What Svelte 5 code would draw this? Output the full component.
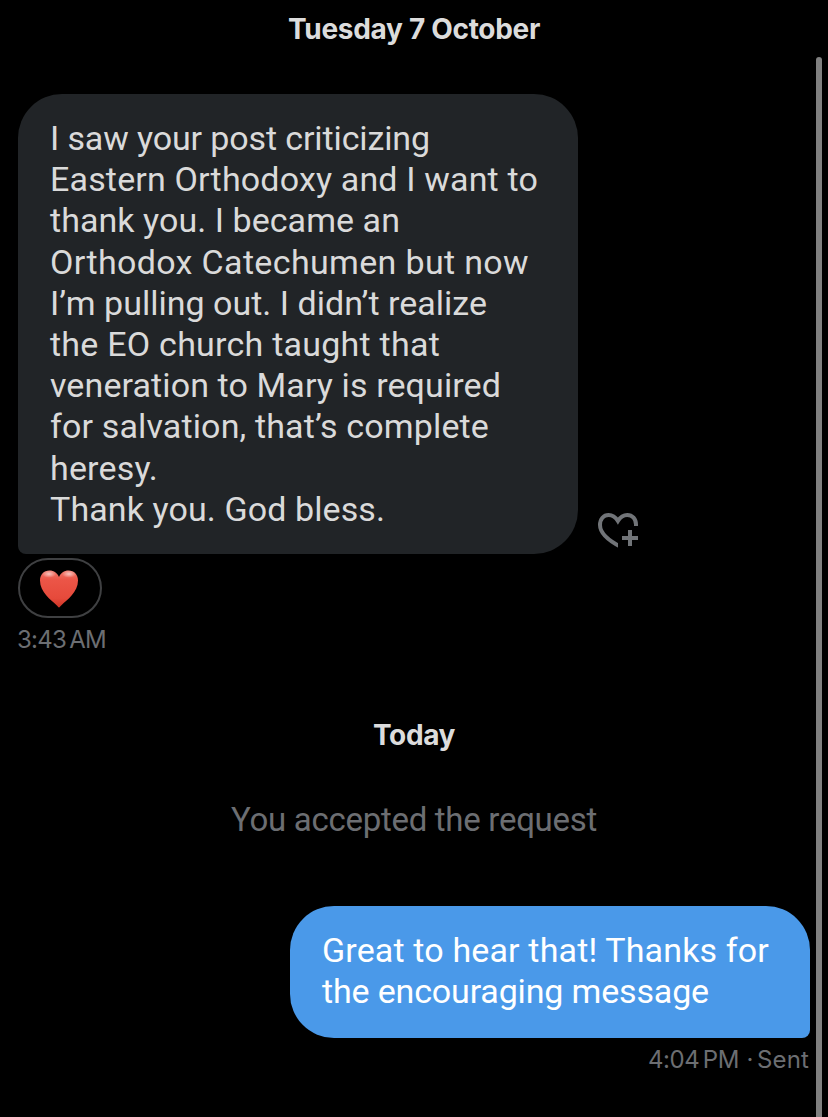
<script>
  const received = [
    ['I saw your post criticizing', 380],
    ['Eastern Orthodoxy and I want to', 488],
    ['thank you. I became an', 350],
    ['Orthodox Catechumen but now', 479],
    ['I’m pulling out. I didn’t realize', 437],
    ['the EO church taught that', 390],
    ['veneration to Mary is required', 451],
    ['for salvation, that’s complete', 439],
    ['heresy.', 108],
    ['Thank you. God bless.', 335],
  ];
  const sent = [
    ['Great to hear that! Thanks for', 447],
    ['the encouraging message', 387],
  ];

  // Tracks a line of text so that it spans the given measure.
  function fit(node, width) {
    const natural = node.getBoundingClientRect().width;
    node.style.letterSpacing = `${(width - natural) / node.textContent.length}px`;
  }
</script>

<main>
  <section class="thread">
    <h2 class="first"><span use:fit={252}>Tuesday 7 October</span></h2>

    <div class="row">
      <div class="bubble in">
        {#each received as [text, width]}
          <p><span use:fit={width}>{text}</span></p>
        {/each}
      </div>
      <button class="react" aria-label="Add reaction">
        <svg width="40" height="36" viewBox="0 0 40 36" fill="none" stroke="#717478" stroke-width="4">
          <clipPath id="cut"><path d="M0 0H40V13H20V36H0Z" /></clipPath>
          <path clip-path="url(#cut)" d="M24 34.500C11 28 2 20.500 2 12C2 6 5.600 2 10.600 2C14.700 2 17.600 4.300 19.900 8C22.200 4.300 25.200 2 29.300 2C34.400 2 38 6 38 11.500V14" />
          <path d="M32 17V33M24 25H40" />
        </svg>
      </button>
    </div>

    <div class="reaction">
      <svg width="40" height="40" viewBox="0 0 40 40">
        <defs>
          <linearGradient id="red" x1="0" y1="0" x2="0" y2="1">
            <stop offset="0" stop-color="#f0796c" />
            <stop offset=".25" stop-color="#ec5547" />
            <stop offset=".75" stop-color="#e64a3b" />
            <stop offset="1" stop-color="#cc3426" />
          </linearGradient>
          <radialGradient id="shine">
            <stop offset="0" stop-color="#fff" stop-opacity=".6" />
            <stop offset="1" stop-color="#fff" stop-opacity="0" />
          </radialGradient>
        </defs>
        <path fill="url(#red)" d="M20 38.500C19.300 38.500 18.800 37.400 17.600 36.200C12 31 1 23 1 11.500C1 5.500 5 1.500 10.500 1.500C15 1.500 18.300 4 20 8C21.700 4 25 1.500 29.500 1.500C35 1.500 39 5.500 39 11.500C39 23 28 31 22.400 36.200C21.200 37.400 20.700 38.500 20 38.500Z" />
        <ellipse cx="10" cy="5" rx="7" ry="3.800" fill="url(#shine)" />
        <ellipse cx="30" cy="5" rx="7" ry="3.800" fill="url(#shine)" />
      </svg>
    </div>
    <div class="meta"><span class="time" use:fit={89}>3:43 AM</span></div>

    <h2 class="today"><span use:fit={82}>Today</span></h2>
    <p class="notice"><span use:fit={366}>You accepted the request</span></p>

    <div class="bubble out">
      {#each sent as [text, width]}
        <p><span use:fit={width}>{text}</span></p>
      {/each}
    </div>
    <div class="meta right"><span use:fit={91}>4:04 PM</span><span class="dot">·</span><span use:fit={52}>Sent</span></div>
  </section>
  <div class="scrollbar"></div>
</main>

<style>
  :global(body) {
    background: #000;
    overflow: hidden;
  }
  main {
    display: flex;
    box-sizing: border-box;
    width: 828px;
    height: 1117px;
    background: #000;
    font-family: Roboto, "Liberation Sans", sans-serif;
    overflow: hidden;
  }
  .thread {
    display: flex;
    flex-direction: column;
    box-sizing: border-box;
    width: 810px;
    padding-left: 18px;
  }
  h2, p {
    margin: 0;
  }
  span {
    display: inline-block;
    white-space: pre;
  }
  h2 {
    height: 36px;
    line-height: 36px;
    font-family: Inter, sans-serif;
    font-size: 28px;
    font-weight: 650;
    color: #dcdcdc;
    text-align: center;
  }
  .first {
    margin-top: 11px;
  }
  .row {
    display: flex;
    align-items: flex-end;
    gap: 20px;
    margin-top: 47px;
  }
  .bubble {
    box-sizing: border-box;
    padding: 24px 32px;
    font-size: 34px;
    line-height: 41.2px;
  }
  .bubble p {
    height: 41.2px;
  }
  .in {
    width: 560px;
    height: 460px;
    border-radius: 44px 44px 44px 8px;
    background: #212427;
    color: #dadada;
  }
  .out {
    align-self: flex-end;
    width: 520px;
    height: 132px;
    margin-top: 65px;
    border-radius: 44px 44px 8px 44px;
    background: #4a99e9;
    color: #fff;
  }
  .react {
    height: 36px;
    margin-bottom: 5px;
    padding: 0;
    border: 0;
    background: none;
  }
  svg {
    display: block;
  }
  .reaction {
    display: flex;
    box-sizing: border-box;
    align-items: center;
    width: 84px;
    height: 60px;
    margin-top: 4px;
    padding: 2px 0 0 19px;
    border: 2px solid #3f4042;
    border-radius: 30px;
  }
  .meta {
    display: flex;
    height: 30px;
    margin-top: 7px;
    font-family: Inter, sans-serif;
    font-size: 24px;
    line-height: 30px;
    word-spacing: -3px;
    color: #6c6e72;
  }
  .time {
    margin-left: -1px;
  }
  .right {
    justify-content: flex-end;
    padding-right: 1px;
  }
  .dot {
    width: 18px;
    padding-left: 4px;
    box-sizing: border-box;
    text-align: center;
  }
  .today {
    margin-top: 62px;
  }
  .notice {
    height: 42px;
    margin-top: 46px;
    font-size: 33px;
    line-height: 42px;
    text-align: center;
    color: #6c6e72;
  }
  .scrollbar {
    width: 6px;
    height: 1070px;
    margin: 57px 0 0 6px;
    border-radius: 3px;
    background: #808080;
  }
</style>
